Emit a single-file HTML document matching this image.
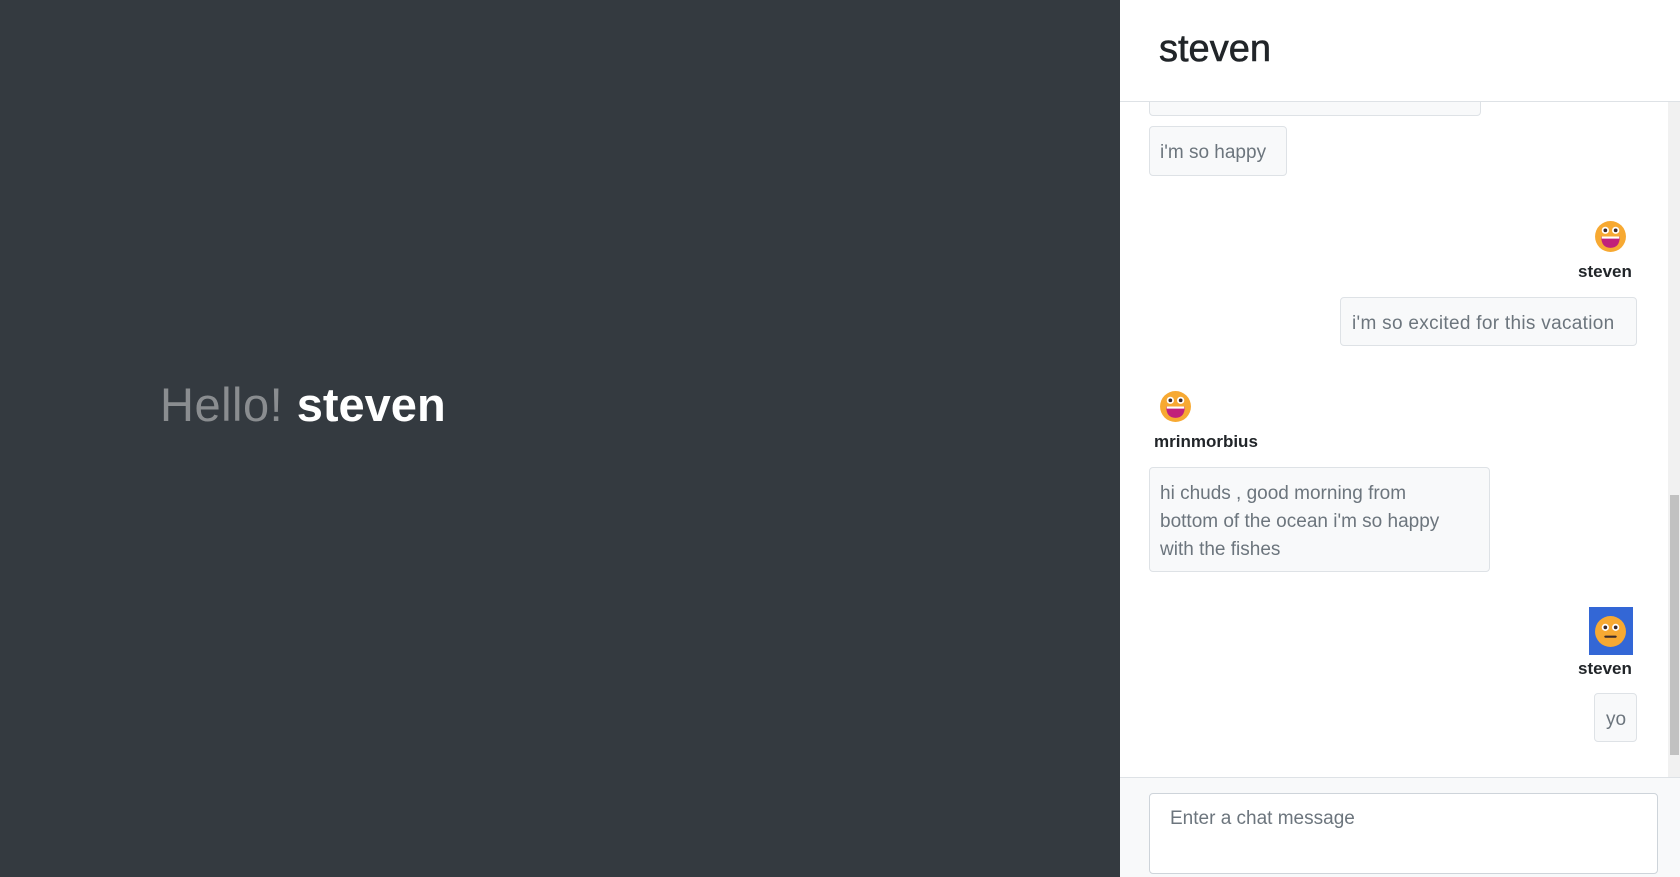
<!DOCTYPE html>
<html><head><meta charset="utf-8"><style>
*{margin:0;padding:0;box-sizing:border-box}
body{width:1680px;height:877px;overflow:hidden;font-family:"Liberation Sans","DejaVu Sans",sans-serif;background:#fff;position:relative}
.left{position:absolute;left:0;top:0;width:1120px;height:877px;background:#343a40}
.hello{position:absolute;left:160px;top:376px;font-size:47px;line-height:58px;letter-spacing:0.5px}
.hello .g{color:#8a8d90}.hello .w{color:#fff;font-weight:bold;letter-spacing:0}
.right{position:absolute;left:1120px;top:0;width:560px;height:877px}
.hdr{position:absolute;left:0;top:0;width:560px;height:102px;border-bottom:1px solid #dee2e6;background:#fff}
.hdr h1{position:absolute;left:39px;top:28px;font-size:38px;font-weight:normal;color:#212529;letter-spacing:0;-webkit-text-stroke:0.6px #212529}
.b{position:absolute;background:#f8f9fa;border:1px solid #dee2e6;border-radius:4px;color:#6c757d;font-size:19px;line-height:28px;padding:12px 11px 8px}
.n{position:absolute;font-size:17px;font-weight:bold;color:#212529}
.av{position:absolute;width:33px;height:33px}
.sb{position:absolute;left:548px;top:102px;width:12px;height:675px;background:#f1f1f1}
.th{position:absolute;left:550px;top:495px;width:9px;height:260px;background:#c1c1c1}
.ftr{position:absolute;left:0;top:777px;width:560px;height:100px;background:#f8f9fa;border-top:1px solid #dee2e6}
.inp{position:absolute;left:29px;top:15px;width:509px;height:81px;background:#fff;border:1px solid #ced4da;border-radius:4px;color:#6c757d;font-size:19px;padding:14px 20px}
</style></head><body>
<div class="left"><div class="hello"><span class="g">Hello!</span> <span class="w">steven</span></div></div>
<div class="right">
<div class="b" style="left:29px;top:60px;width:332px;height:56px"></div>
<div class="hdr"><h1>steven</h1></div>
<div class="b" style="left:29px;top:126px;width:138px;height:50px;padding:12px 10px 8px">i'm so happy</div>
<svg class="av" style="left:474px;top:220px" viewBox="0 0 32 32"><circle cx="16" cy="16" r="15" fill="#f7a932"/><circle cx="11" cy="10" r="3.5" fill="#fff"/><circle cx="21" cy="10" r="3.5" fill="#fff"/><circle cx="11" cy="10" r="1.8" fill="#3b2a2a"/><circle cx="21" cy="10" r="1.8" fill="#3b2a2a"/><path d="M7 16 H25 Q25 27 16 27 Q7 27 7 16Z" fill="#c1207a"/><path d="M7.5 16 H24.5 V18 H7.5Z" fill="#fff"/></svg>
<div class="n" style="left:458px;top:262px">steven</div>
<div class="b" style="left:220px;top:297px;width:297px;height:49px;letter-spacing:0.3px">i'm so excited for this vacation</div>
<svg class="av" style="left:39px;top:390px" viewBox="0 0 32 32"><circle cx="16" cy="16" r="15" fill="#f7a932"/><circle cx="11" cy="10" r="3.5" fill="#fff"/><circle cx="21" cy="10" r="3.5" fill="#fff"/><circle cx="11" cy="10" r="1.8" fill="#3b2a2a"/><circle cx="21" cy="10" r="1.8" fill="#3b2a2a"/><path d="M7 16 H25 Q25 27 16 27 Q7 27 7 16Z" fill="#c1207a"/><path d="M7.5 16 H24.5 V18 H7.5Z" fill="#fff"/></svg>
<div class="n" style="left:34px;top:432px">mrinmorbius</div>
<div class="b" style="left:29px;top:467px;width:341px;height:105px;padding:12px 30px 8px 10px;font-size:19px">hi chuds , good morning from bottom of the ocean i'm so happy with the fishes</div>
<div style="position:absolute;left:469px;top:607px;width:44px;height:48px;background:#3367d6"></div>
<svg class="av" style="left:474px;top:615px" viewBox="0 0 32 32"><circle cx="16" cy="16" r="15" fill="#f7a932"/><circle cx="11" cy="12" r="3.5" fill="#fff"/><circle cx="21" cy="12" r="3.5" fill="#fff"/><circle cx="11" cy="12" r="1.8" fill="#3b2a2a"/><circle cx="21" cy="12" r="1.8" fill="#3b2a2a"/><rect x="10" y="20" width="12" height="2" rx="1" fill="#3b2a2a"/></svg>
<div class="n" style="left:458px;top:659px">steven</div>
<div class="b" style="left:474px;top:693px;width:43px;height:49px">yo</div>
<div class="sb"></div><div class="th"></div>
<div class="ftr"><div class="inp">Enter a chat message</div></div>
</div>
</body></html>
